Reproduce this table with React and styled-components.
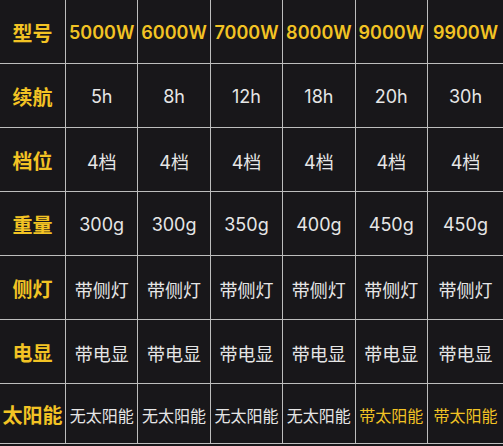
import React from 'react';
import styled, { createGlobalStyle } from 'styled-components';

const GlobalStyle = createGlobalStyle`
  html, body {
    margin: 0;
    padding: 0;
    background: #18171a;
    overflow: hidden;
  }
`;

const Table = styled.div`
  display: grid;
  grid-template-columns: 66px repeat(5, 72.4px) 1fr;
  grid-template-rows: repeat(6, 64px) 60px;
  width: 503px;
  height: 446px;
  background: #18171a;
  font-family: Inter, 'Noto Sans CJK SC', sans-serif;
`;

const Cell = styled.div`
  box-sizing: border-box;
  display: flex;
  align-items: center;
  justify-content: center;
  white-space: nowrap;
  border-bottom: 1px solid #bdbdbd;
  border-right: ${p => (p.$last ? 'none' : '1px solid #bdbdbd')};
  color: ${p => (p.$gold ? '#f2c324' : '#e6e6e6')};
  font-size: ${p => p.$size || 18}px;
  font-weight: 400;
  padding-top: 2px;
`;

const Label = styled(Cell)`
  font-size: 20px;
  font-weight: 700;
  color: #f2c324;
`;

const Model = styled(Cell)`
  font-size: 18px;
  font-weight: 600;
  color: #f2c324;
`;

const models = ['5000W', '6000W', '7000W', '8000W', '9000W', '9900W'];

const rows = [
  { label: '续航', values: ['5h', '8h', '12h', '18h', '20h', '30h'] },
  { label: '档位', values: ['4档', '4档', '4档', '4档', '4档', '4档'] },
  { label: '重量', values: ['300g', '300g', '350g', '400g', '450g', '450g'] },
  { label: '侧灯', values: Array(6).fill('带侧灯') },
  { label: '电显', values: Array(6).fill('带电显') },
  {
    label: '太阳能',
    size: 16,
    values: ['无太阳能', '无太阳能', '无太阳能', '无太阳能', '带太阳能', '带太阳能']
  }
];

const App = () => {
  return (
    <>
      <GlobalStyle />
      <Table>
        <Label>型号</Label>
        {models.map((m, i) => (
          <Model key={m} $last={i === 5}>
            {m}
          </Model>
        ))}
        {rows.map(r => (
          <React.Fragment key={r.label}>
            <Label>{r.label}</Label>
            {r.values.map((v, i) => (
              <Cell
                key={i}
                $size={r.size}
                $gold={v === '带太阳能'}
                $last={i === 5}
              >
                {v}
              </Cell>
            ))}
          </React.Fragment>
        ))}
      </Table>
    </>
  );
};

export default App;
